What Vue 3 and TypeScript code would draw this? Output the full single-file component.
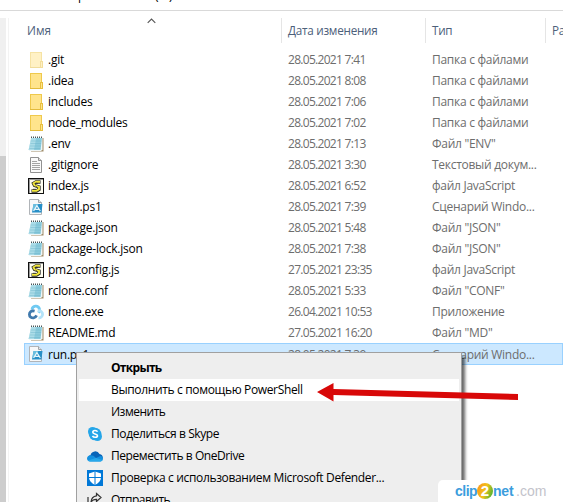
<script setup lang="ts">
type Kind = 'folder' | 'note' | 'text' | 'script' | 'shell' | 'app'
interface FileRow { name: string; date: string; type: string; kind: Kind; faded?: boolean; selected?: boolean }
interface MenuItem { label: string; icon?: 'skype' | 'cloud' | 'shield' | 'share'; bold?: boolean; active?: boolean; spacing: number }

const files: FileRow[] = [
  { name: '.git', date: '28.05.2021 7:41', type: 'Папка с файлами', kind: 'folder', faded: true },
  { name: '.idea', date: '28.05.2021 8:08', type: 'Папка с файлами', kind: 'folder' },
  { name: 'includes', date: '28.05.2021 7:06', type: 'Папка с файлами', kind: 'folder' },
  { name: 'node_modules', date: '28.05.2021 7:02', type: 'Папка с файлами', kind: 'folder' },
  { name: '.env', date: '28.05.2021 7:13', type: 'Файл "ENV"', kind: 'note' },
  { name: '.gitignore', date: '28.05.2021 3:30', type: 'Текстовый докум...', kind: 'text' },
  { name: 'index.js', date: '28.05.2021 6:52', type: 'файл JavaScript', kind: 'script' },
  { name: 'install.ps1', date: '28.05.2021 7:39', type: 'Сценарий Windo...', kind: 'shell' },
  { name: 'package.json', date: '28.05.2021 5:48', type: 'Файл "JSON"', kind: 'note' },
  { name: 'package-lock.json', date: '28.05.2021 7:38', type: 'Файл "JSON"', kind: 'note' },
  { name: 'pm2.config.js', date: '27.05.2021 23:35', type: 'файл JavaScript', kind: 'script' },
  { name: 'rclone.conf', date: '28.05.2021 5:33', type: 'Файл "CONF"', kind: 'note' },
  { name: 'rclone.exe', date: '26.04.2021 10:53', type: 'Приложение', kind: 'app' },
  { name: 'README.md', date: '27.05.2021 16:20', type: 'Файл "MD"', kind: 'note' },
  { name: 'run.ps1', date: '28.05.2021 7:39', type: 'Сценарий Windo...', kind: 'shell', selected: true },
]

const menu: MenuItem[] = [
  { label: 'Открыть', bold: true, spacing: -0.7 },
  { label: 'Выполнить с помощью PowerShell', active: true, spacing: -0.35 },
  { label: 'Изменить', spacing: -0.5 },
  { label: 'Поделиться в Skype', icon: 'skype', spacing: -0.4 },
  { label: 'Переместить в OneDrive', icon: 'cloud', spacing: -0.43 },
  { label: 'Проверка с использованием Microsoft Defender...', icon: 'shield', spacing: -0.35 },
  { label: 'Отправить', icon: 'share', spacing: -0.5 },
]
</script>

<template>
  <div class="window">
    <div class="address"><span class="crumb">р</span><span class="paren">(</span><span>)</span></div>
    <div class="body">
      <div class="scroll"><div class="track"></div><div class="thumb"></div></div>
      <div class="list">
        <div class="head">
          <div class="cell name">Имя
            <svg class="sort" width="9" height="6" viewBox="0 0 9 6"><path d="M.7 4.8 4.5 1l3.8 3.8" fill="none" stroke="#555" stroke-width="1.1" /></svg>
          </div>
          <div class="cell date">Дата изменения</div>
          <div class="cell type">Тип</div>
          <div class="cell size">Размер</div>
        </div>
        <div v-for="f in files" :key="f.name" class="row" :class="{ selected: f.selected }">
          <svg class="icon" :class="{ faded: f.faded }" width="16" height="16" viewBox="0 0 16 16">
            <g v-if="f.kind === 'folder'">
              <rect x="2.5" y=".5" width="11" height="15" fill="#ffe48c" stroke="#efc94c" />
              <path d="M2 15.5h12" stroke="#e3bb3c" />
              <rect x="12.5" y="9.5" width="2" height="6" fill="#ffe48c" stroke="#e8bf3e" />
            </g>
            <g v-else-if="f.kind === 'note'">
              <path d="M4 2h11.5v13.5H3z" fill="#a08c68" />
              <path d="M3 1.8h11.5v11.8L13 15H1z" fill="#eef6f7" />
              <path d="M3.2 2H14l-1.400 12H.6z" fill="#8ccbdc" />
              <path d="M3.2 2h5L6 14H.6z" fill="#c2e8f0" opacity=".6" />
              <path d="M2.9 5h10.5M2.5 7.500h10.600M2 10h10.800M1.400 12.500h11" stroke="#68b1c8" stroke-width=".4" />
              <path d="M3 1.200h11.500" stroke="#4b5659" stroke-width="1.500" stroke-dasharray="1 1" />
            </g>
            <g v-else-if="f.kind === 'text'">
              <path d="M2.5.5h8l3 3v12h-11z" fill="#fafafa" stroke="#919191" />
              <path d="M10.5.5v3h3" fill="#ddd" stroke="#919191" />
              <path d="M4 4.5h5M4 6.5h8M4 8.5h8M4 10.5h8M4 12.5h8" stroke="#a5a5a5" />
            </g>
            <g v-else-if="f.kind === 'script'">
              <rect x=".5" y=".5" width="15" height="15" fill="#fffef0" stroke="#111" />
              <path d="M1 1h14v1H2v13H1z" fill="#999" />
              <path d="M12.500 4H8L5.500 5.500l1 2L11 9v2.500L8.500 13H3.500" fill="none" stroke="#222" stroke-width="3.300" />
              <path d="M12 3.700H8L5.500 5.300l1 2L11 9v2.300L8.500 12.700H4" fill="none" stroke="#f3e83c" stroke-width="1.900" />
              <path d="m7.500 5 2.500.6M7.500 8l2 1.500M5 11.300h3" stroke="#222" stroke-width=".7" />
            </g>
            <g v-else-if="f.kind === 'shell'">
              <path d="M1.500.5h9l3 3v12h-12z" fill="#f7f8f9" stroke="#b0b4b8" />
              <path d="M10.500.5v3h3" fill="#e0e3e5" stroke="#a0a5a9" />
              <path d="M5.500 5H14.500L13.500 13.500H4z" fill="#278fc7" />
              <path d="M5.500 5h5L8 9 4.200 12.500z" fill="#7cc9e5" opacity=".8" />
              <path d="m5.600 12 3.300-5.300 3.400 5.300M7.300 10.300h3.500" fill="none" stroke="#e8f7fc" stroke-width="1.200" />
            </g>
            <g v-else fill="none" stroke-width="2.8">
              <path d="M4 5.600a3.800 3.800 0 0 1 7.400-.8c.5 1.600 0 2.700-.8 4" stroke="#70caf2" />
              <path d="M9.800 6.800c2.800-.5 4.800 1.400 4.800 3.500 0 2.300-2 3.800-4.100 3.600" stroke="#b4e3f9" />
              <path d="M6.600 7.200C3.200 6.300 1.400 8.200 1.400 10.400c0 2.400 2 3.700 4.200 3.500 1.600-.2 2.300-1.100 3-2.600" stroke="#3f79ad" />
            </g>
          </svg>
          <span class="fname">{{ f.name }}</span>
          <span class="fdate">{{ f.date }}</span>
          <span class="ftype">{{ f.type }}</span>
        </div>
      </div>
    </div>

    <div class="menu">
      <div v-for="m in menu" :key="m.label" class="item" :class="{ bold: m.bold, active: m.active }">
        <span class="slot">
          <svg v-if="m.icon" width="16" height="16" viewBox="0 0 16 16">
            <g v-if="m.icon === 'skype'">
              <circle cx="5.5" cy="5.5" r="4.5" fill="#28a8ea" /><circle cx="10.5" cy="10.5" r="4.5" fill="#28a8ea" /><circle cx="8" cy="8" r="6.3" fill="#25a5e8" />
              <path d="M10.500 5.800C9.800 4.200 5.800 4 5.800 6.200c0 2.200 4.700 1.200 4.700 3.500 0 2.200-4.200 2-5 .2" fill="none" stroke="#fff" stroke-width="1.600" />
            </g>
            <g v-else-if="m.icon === 'cloud'">
              <path d="M3.500 7.200A4.800 4.800 0 0 1 12.500 6a4 4 0 0 1 3.300 4l-5 2L1 10.500c0-1.800 1-3.100 2.500-3.300z" fill="#0864b8" />
              <path d="M3.500 7.200c-2 0-3.500 1.300-3.500 3.300 0 2 1.500 3 3.500 3h9.400c1.900 0 3.100-1.200 3.100-2.900 0-1.500-1.100-2.600-2.700-2.700L9 10 6.500 7.800z" fill="#1490df" />
              <path d="M9 10 .8 12.500c.6.700 1.600 1 2.700 1h9.400c1.300 0 2.300-.6 2.800-1.500z" fill="#28a8ea" />
            </g>
            <g v-else-if="m.icon === 'shield'">
              <rect width="16" height="16" fill="#0078d7" />
              <path d="M8 1.500 14 3.500v4c0 3.300-2.500 5.700-6 7.500-3.500-1.800-6-4.200-6-7.500v-4z" fill="#fff" />
              <path d="M8 1v14M1.500 7.500h13" stroke="#0078d7" />
            </g>
            <g v-else fill="none" stroke="#333" stroke-width="1.2">
              <path d="M1 5v9h12v-2.500" /><path d="M9.500 1.500 14 5.500l-4.500 4V7.300C7 7.200 5.300 8 4 10c.3-3.600 2.200-5.800 5.500-6.200z" />
            </g>
          </svg>
        </span>
        <span :style="{ letterSpacing: m.spacing + 'px' }">{{ m.label }}</span>
      </div>
    </div>

    <svg class="arrow" width="204" height="22" viewBox="0 0 204 22"><path d="M1 10 17.500 1V7L202 12v6L17.500 13v6.500z" fill="#d80808" /></svg>

    <div class="brand"><span class="blue clip">clip</span><span class="ball">2</span><span class="blue net">net</span><span class="com">.com</span></div>
  </div>
</template>

<style>
body { overflow: hidden; background: #fff; }
</style>

<style scoped>
.window { position: relative; width: 563px; height: 502px; overflow: hidden; background: #fff; color: #000; font: 12px/21px "Open Sans", "Noto Sans", sans-serif; white-space: nowrap; }
.address { height: 10px; overflow: hidden; border-bottom: 1px solid #d9d9d9; padding-left: 78px; line-height: 16px; display: flex; }
.address span { margin-top: -12px; }
.crumb { width: 77px; }
.paren { width: 14px; }
.body { display: flex; height: 491px; padding-top: 7px; box-sizing: border-box; }
.scroll { width: 6px; flex: none; }
.track { height: 138px; background: #f0f0f0; }
.thumb { height: 346px; background: #cdcdcd; }
.list { width: 554px; flex: none; margin-left: 2px; border-left: 1px solid #f3f3f3; }
.head { display: flex; height: 25px; margin-bottom: 6px; color: #4c607a; line-height: 25px; }
.cell { box-sizing: border-box; border-right: 1px solid #e5e5e5; flex: none; font-size: 11.7px; letter-spacing: -.25px; }
.name { width: 273px; padding-left: 18px; position: relative; letter-spacing: 0; }
.sort { position: absolute; left: 138px; top: 0; }
.date { width: 144px; padding-left: 6px; }
.type { width: 120px; padding-left: 6px; }
.size { width: 50px; padding-left: 6px; border: 0; }
.row { height: 21px; display: flex; align-items: center; padding-left: 19px; }
.row.selected { height: 22px; margin-left: 15px; padding-left: 3px; box-sizing: border-box; background: #cce8ff; border: 1px solid #99d1ff; }
.icon { flex: none; }
.faded { opacity: .5; }
.fname { width: 240px; margin-left: 4px; letter-spacing: -.24px; }
.fdate { width: 144px; color: #6d6d6d; letter-spacing: -.7px; }
.ftype { color: #6d6d6d; letter-spacing: -.28px; }
.menu { position: absolute; left: 76px; top: 352px; width: 386px; height: 170px; box-sizing: border-box; padding: 4px 2px; background: #eee; border: 1px solid #a0a0a0; box-shadow: 4px 4px 3px -1px rgba(0, 0, 0, .6); line-height: 22px; }
.item { height: 22px; display: flex; align-items: center; }
.item.active { background: #fff; }
.item.bold { font-weight: 700; }
.slot { width: 32px; padding-left: 8px; box-sizing: border-box; display: flex; }
.arrow { position: absolute; left: 316px; top: 382px; }
.brand { position: absolute; left: 438px; top: 480px; width: 125px; height: 22px; padding-left: 17px; box-sizing: border-box; border-radius: 5px 0 0; background: #fff; display: flex; align-items: center; font: 700 14px/20px "Liberation Sans", sans-serif; }
.blue { color: #3b9ddd; }
.clip { width: 22px; letter-spacing: -.5px; }
.net { width: 23px; letter-spacing: -.2px; }
.ball { width: 16px; height: 16px; border-radius: 50%; background: linear-gradient(110deg, #f9a01b 15%, #f2c21c 50%, #62b52f 85%); color: #fff; font-size: 15px; line-height: 16px; text-align: center; }
.com { color: #c3c3cb; font-weight: 400; }
</style>
